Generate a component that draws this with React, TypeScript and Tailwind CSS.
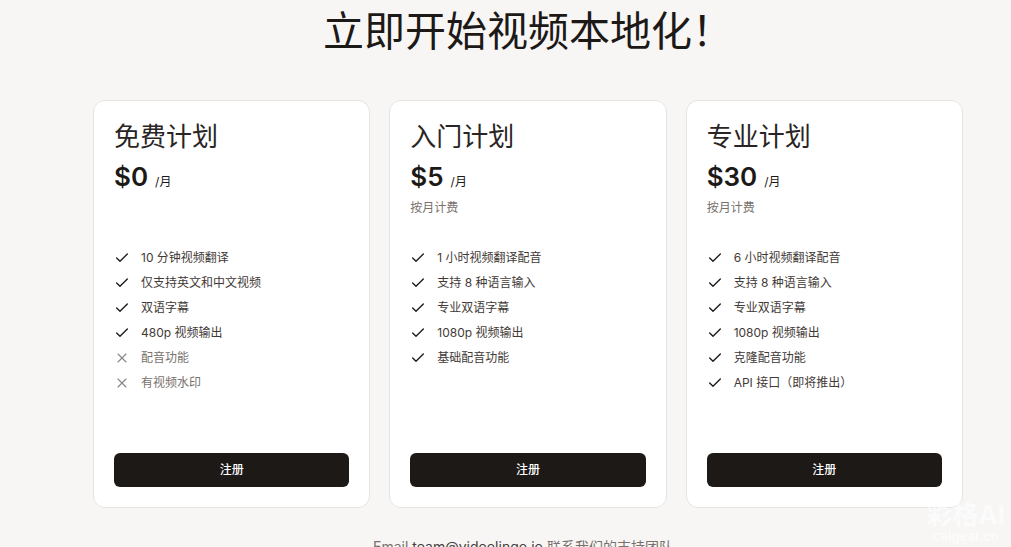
import React from "react";

const font = { fontFamily: '"Inter", "Noto Sans CJK SC", sans-serif' };

type Feature = { text: string; ok: boolean };
type Plan = { name: string; price: string; note?: string; features: Feature[] };

const plans: Plan[] = [
  {
    name: "免费计划",
    price: "$0",
    features: [
      { text: "10 分钟视频翻译", ok: true },
      { text: "仅支持英文和中文视频", ok: true },
      { text: "双语字幕", ok: true },
      { text: "480p 视频输出", ok: true },
      { text: "配音功能", ok: false },
      { text: "有视频水印", ok: false },
    ],
  },
  {
    name: "入门计划",
    price: "$5",
    note: "按月计费",
    features: [
      { text: "1 小时视频翻译配音", ok: true },
      { text: "支持 8 种语言输入", ok: true },
      { text: "专业双语字幕", ok: true },
      { text: "1080p 视频输出", ok: true },
      { text: "基础配音功能", ok: true },
    ],
  },
  {
    name: "专业计划",
    price: "$30",
    note: "按月计费",
    features: [
      { text: "6 小时视频翻译配音", ok: true },
      { text: "支持 8 种语言输入", ok: true },
      { text: "专业双语字幕", ok: true },
      { text: "1080p 视频输出", ok: true },
      { text: "克隆配音功能", ok: true },
      { text: "API 接口（即将推出）", ok: true },
    ],
  },
];

function Check() {
  return (
    <svg width="16" height="16" viewBox="0 0 24 24" fill="none" stroke="#1c1917" strokeWidth="2" strokeLinecap="round" strokeLinejoin="round">
      <path d="M20 6 9 17l-5-5" />
    </svg>
  );
}

function Cross() {
  return (
    <svg width="16" height="16" viewBox="0 0 24 24" fill="none" stroke="#8a8580" strokeWidth="1.6" strokeLinecap="round" strokeLinejoin="round">
      <path d="M18 6 6 18" />
      <path d="m6 6 12 12" />
    </svg>
  );
}

function Card({ plan }: { plan: Plan }) {
  return (
    <div className="flex h-[408px] flex-col rounded-[12px] border border-[#e7e5e4] bg-white px-[20px] pb-[20px] pt-[18px]">
      <div className="text-[26px] leading-[36px] text-[#292524]">{plan.name}</div>
      <div className="mt-[5px] flex items-baseline gap-[7px]">
        <span className="text-[26px] font-semibold leading-[34px] text-[#1c1917]">{plan.price}</span>
        <span className="text-[12px] text-[#1c1917]">/月</span>
      </div>
      <div className="mt-[6px] h-[16px] text-[12px] leading-[16px] text-[#78716c]">{plan.note ?? ""}</div>
      <ul className="mt-[33px] flex flex-col gap-[7px]">
        {plan.features.map((f) => (
          <li key={f.text} className="flex h-[18px] items-center gap-[11px]">
            {f.ok ? <Check /> : <Cross />}
            <span className={"text-[12px] leading-[18px] " + (f.ok ? "text-[#3f3a36]" : "text-[#78716c]")}>{f.text}</span>
          </li>
        ))}
      </ul>
      <div className="flex-1" />
      <button className="h-[34px] w-full rounded-[6px] bg-[#1c1917] text-[12px] font-medium text-white">注册</button>
    </div>
  );
}

export default function App() {
  return (
    <div className="relative h-[547px] w-[1011px] overflow-hidden bg-[#f7f6f5]" style={font}>
      <div className="ml-[93px] w-[870px]">
        <h1 className="pt-[3px] text-center text-[41px] font-normal leading-[57px] text-[#1c1917]">立即开始视频本地化！</h1>
        <div className="mt-[40px] grid grid-cols-3 gap-[19px]">
          {plans.map((p) => (
            <Card key={p.name} plan={p} />
          ))}
        </div>
        <p className="mt-[28px] pr-[10px] text-center text-[14px] text-[#78716c]">
          Email <span className="text-[#44403c]">team@videolingo.io</span> 联系我们的支持团队
        </p>
      </div>
      <div className="pointer-events-none absolute bottom-[4px] right-[6px] flex flex-col items-center gap-[2px] text-white opacity-60">
        <span className="text-[26px] font-bold leading-[26px]">彩格AI</span>
        <span className="text-[13px] font-bold leading-[13px]">caigeai.cn</span>
      </div>
    </div>
  );
}
